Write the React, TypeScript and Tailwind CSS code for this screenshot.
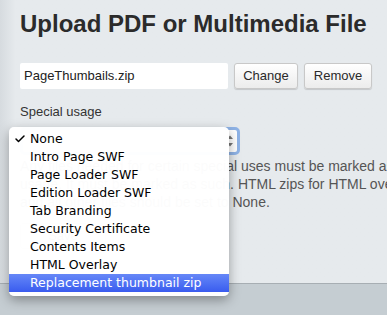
import { Check } from "lucide-react";

const ITEMS = [
  "None",
  "Intro Page SWF",
  "Page Loader SWF",
  "Edition Loader SWF",
  "Tab Branding",
  "Security Certificate",
  "Contents Items",
  "HTML Overlay",
  "Replacement thumbnail zip",
];

const HELV = "font-['Liberation_Sans',Arial,sans-serif]";

export default function App() {
  return (
    <div className="relative h-[315px] w-[387px] overflow-hidden bg-[#c5cdd2]">
      {/* panel */}
      <div
        className={`relative h-[284px] border-b border-[#a7aeb3] bg-gradient-to-r from-[#d6dbdf] from-0% via-[#e6eaed] via-[4%] to-[#e6eaed] pl-5 pt-[9px] ${HELV}`}
      >
        <h1 className="whitespace-nowrap text-[24px] font-bold leading-[30px] text-[#2b2b2b]">
          Upload PDF or Multimedia File
        </h1>

        <div className="mt-[24px] flex items-center gap-[6px]">
          <div className="flex h-[26px] w-[208px] items-center rounded-[2px] bg-white px-[4px] text-[13px] text-[#222]">
            PageThumbails.zip
          </div>
          <button className="h-[26px] w-[64px] rounded-[3px] border border-[#c8c8c8] bg-gradient-to-b from-white to-[#ececec] text-[13px] text-[#2a2a2a] shadow-[0_1px_1px_rgba(0,0,0,0.15)]">
            Change
          </button>
          <button className="h-[26px] w-[68px] rounded-[3px] border border-[#c8c8c8] bg-gradient-to-b from-white to-[#ececec] text-[13px] text-[#2a2a2a] shadow-[0_1px_1px_rgba(0,0,0,0.15)]">
            Remove
          </button>
        </div>

        <div className="mt-[14px] text-[13px] leading-[18px] text-[#333]">Special usage</div>

        <div className="mt-[6px] flex h-[28px] w-[220px] items-center justify-end rounded-[5px] border-[3px] border-[#8fb3e6] bg-white pr-[3px]">
          <svg width="8" height="14" viewBox="0 0 8 14" className="text-[#777]">
            <path d="M1 5 L4 1.5 L7 5 Z M1 9 L4 12.5 L7 9 Z" fill="currentColor" />
          </svg>
        </div>

        <div className="mt-[2px] w-[480px] text-[14px] leading-[18px] text-[#555]">
          <div className="whitespace-nowrap">Any files needed for certain special uses must be marked as special</div>
          <div className="whitespace-nowrap">usage. It must be marked as such. HTML zips for HTML overlays</div>
          <div className="whitespace-nowrap">and all other files should be set to None.</div>
        </div>

        <button className="mt-[12px] h-[26px] w-[86px] rounded-[3px] border border-[#c8c8c8] bg-gradient-to-b from-white to-[#ececec] text-[13px] text-[#2a2a2a]">
          Save
        </button>
      </div>

      {/* open select menu */}
      <div className="absolute left-[9px] top-[127px] w-[220px] rounded-[5px] bg-white/[0.98] pb-[4px] pt-[3px] font-['DejaVu_Sans',Verdana,sans-serif] text-[12.5px] text-black shadow-[0_4px_12px_rgba(0,0,0,0.35)]">
        {ITEMS.map((item, i) => {
          const active = i === ITEMS.length - 1;
          return (
            <div
              key={item}
              className={`relative flex h-[18px] items-center whitespace-nowrap pl-[21px] ${
                active ? "bg-gradient-to-b from-[#6687f7] to-[#3a5bef] text-white" : ""
              }`}
            >
              {i === 0 && (
                <Check className="absolute left-[5px] top-[3px] h-[12px] w-[12px]" strokeWidth={3} />
              )}
              {item}
            </div>
          );
        })}
      </div>
    </div>
  );
}
